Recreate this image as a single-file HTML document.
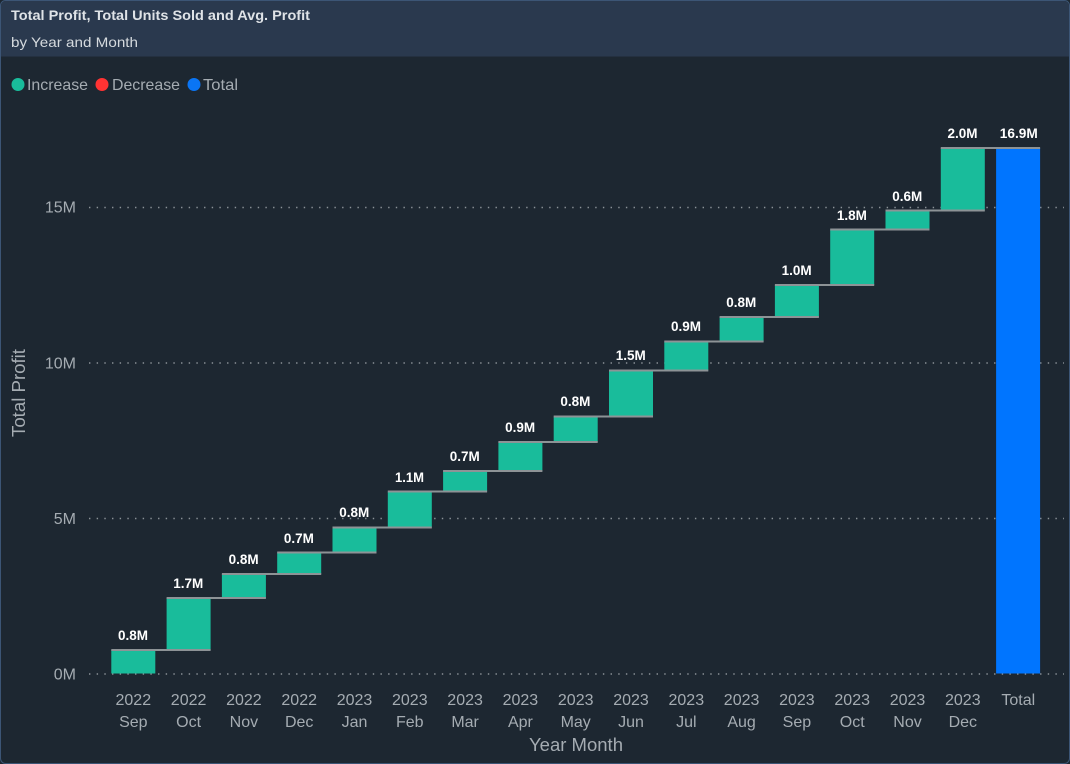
<!DOCTYPE html>
<html><head><meta charset="utf-8"><style>
html,body{margin:0;padding:0;background:#1d2731;width:1070px;height:764px;overflow:hidden}
svg{display:block;font-family:"Liberation Sans",sans-serif}
.a{fill:#a5acb2;font-size:16px;text-anchor:middle}
.y{fill:#a5acb2;font-size:16px;text-anchor:end}
.d{fill:#fff;font-size:14px;font-weight:bold;text-anchor:middle}
.b{fill:#19bc9b}
.c{stroke:#8d9396;stroke-width:1.9;fill:none}
.g{stroke:#8b9298;stroke-width:1.4;stroke-dasharray:1.4 6.27;fill:none}
</style></head><body>
<svg width="1070" height="764" viewBox="0 0 1070 764" xmlns="http://www.w3.org/2000/svg">
<rect x="0.5" y="0.5" width="1069" height="763" rx="5" fill="#1d2731" stroke="#3c5575"/>
<path d="M1 56.5V5.5A4.5 4.5 0 0 1 5.500 1H1064.500A4.500 4.500 0 0 1 1069 5.500V56.500Z" fill="#2a394e"/>
<text x="11" y="20" fill="#dfe3e7" font-size="14" font-weight="bold" textLength="299" lengthAdjust="spacingAndGlyphs">Total Profit, Total Units Sold and Avg. Profit</text>
<text x="11" y="47" fill="#d5dade" font-size="14" textLength="127" lengthAdjust="spacingAndGlyphs">by Year and Month</text>
<circle cx="18" cy="84.500" r="6.500" fill="#19bc9b"/><text x="27" y="90" fill="#a5acb2" font-size="16" textLength="61" lengthAdjust="spacingAndGlyphs">Increase</text>
<circle cx="102" cy="84.500" r="6.500" fill="#ff3333"/><text x="112" y="90" fill="#a5acb2" font-size="16" textLength="68" lengthAdjust="spacingAndGlyphs">Decrease</text>
<circle cx="194" cy="84.500" r="6.500" fill="#0a75f5"/><text x="203" y="90" fill="#a5acb2" font-size="16" textLength="35" lengthAdjust="spacingAndGlyphs">Total</text>

<path class="g" d="M89 207.500H1064M89 363H1064M89 518.500H1064M89 674H1064"/>

<g transform="translate(0.3 0)">
<rect class="b" x="111" y="650" width="44" height="23.500"/>
<rect class="b" x="166.300" y="598" width="44" height="52"/>
<rect class="b" x="221.600" y="574" width="44" height="24"/>
<rect class="b" x="276.900" y="552.500" width="44" height="21.500"/>
<rect class="b" x="332.200" y="527.500" width="44" height="25"/>
<rect class="b" x="387.500" y="491.500" width="44" height="36"/>
<rect class="b" x="442.800" y="471" width="44" height="20.500"/>
<rect class="b" x="498.100" y="442" width="44" height="29"/>
<rect class="b" x="553.400" y="416.500" width="44" height="25.500"/>
<rect class="b" x="608.700" y="370.500" width="44" height="46"/>
<rect class="b" x="664" y="341.500" width="44" height="29"/>
<rect class="b" x="719.300" y="317" width="44" height="24.500"/>
<rect class="b" x="774.600" y="285" width="44" height="32"/>
<rect class="b" x="829.900" y="229.500" width="44" height="55.500"/>
<rect class="b" x="885.200" y="210.500" width="44" height="19"/>
<rect class="b" x="940.500" y="148" width="44" height="62.500"/>
<rect x="995.800" y="148" width="44" height="525.500" fill="#0075ff"/>

<path class="c" d="M111 650H210.300M166.300 598H265.600M221.600 574H320.900M276.900 552.500H376.200M332.200 527.500H431.500M387.500 491.500H486.800M442.800 471H542.100M498.100 442H597.400M553.400 416.500H652.700M608.700 370.500H708M664 341.500H763.300M719.300 317H818.600M774.600 285H873.900M829.900 229.500H929.200M885.200 210.500H984.500M940.500 148H1039.800"/>
</g>

<g class="d">
<text x="133" y="640" textLength="30" lengthAdjust="spacingAndGlyphs">0.8M</text>
<text x="188.300" y="588" textLength="30" lengthAdjust="spacingAndGlyphs">1.7M</text>
<text x="243.600" y="564" textLength="30" lengthAdjust="spacingAndGlyphs">0.8M</text>
<text x="298.900" y="543" textLength="30" lengthAdjust="spacingAndGlyphs">0.7M</text>
<text x="354.200" y="517" textLength="30" lengthAdjust="spacingAndGlyphs">0.8M</text>
<text x="409.500" y="482" textLength="29" lengthAdjust="spacingAndGlyphs">1.1M</text>
<text x="464.800" y="461" textLength="30" lengthAdjust="spacingAndGlyphs">0.7M</text>
<text x="520.100" y="432" textLength="30" lengthAdjust="spacingAndGlyphs">0.9M</text>
<text x="575.400" y="406" textLength="30" lengthAdjust="spacingAndGlyphs">0.8M</text>
<text x="630.700" y="360" textLength="30" lengthAdjust="spacingAndGlyphs">1.5M</text>
<text x="686" y="331" textLength="30" lengthAdjust="spacingAndGlyphs">0.9M</text>
<text x="741.300" y="307" textLength="30" lengthAdjust="spacingAndGlyphs">0.8M</text>
<text x="796.600" y="275" textLength="30" lengthAdjust="spacingAndGlyphs">1.0M</text>
<text x="851.900" y="220" textLength="30" lengthAdjust="spacingAndGlyphs">1.8M</text>
<text x="907.200" y="201" textLength="30" lengthAdjust="spacingAndGlyphs">0.6M</text>
<text x="962.500" y="138" textLength="30" lengthAdjust="spacingAndGlyphs">2.0M</text>
<text x="1018.800" y="138" textLength="38" lengthAdjust="spacingAndGlyphs">16.9M</text>
</g>

<text class="y" x="76" y="212.500">15M</text>
<text class="y" x="76" y="368.500">10M</text>
<text class="y" x="76" y="524">5M</text>
<text class="y" x="76" y="679.500">0M</text>

<text x="25" y="437" fill="#a5acb2" font-size="18" transform="rotate(-90 25 437)" textLength="88" lengthAdjust="spacingAndGlyphs">Total Profit</text>

<g class="a">
<text x="133.300" y="705">2022</text><text x="133.300" y="727">Sep</text>
<text x="188.600" y="705">2022</text><text x="188.600" y="727">Oct</text>
<text x="243.900" y="705">2022</text><text x="243.900" y="727">Nov</text>
<text x="299.200" y="705">2022</text><text x="299.200" y="727">Dec</text>
<text x="354.500" y="705">2023</text><text x="354.500" y="727">Jan</text>
<text x="409.800" y="705">2023</text><text x="409.800" y="727">Feb</text>
<text x="465.100" y="705">2023</text><text x="465.100" y="727">Mar</text>
<text x="520.400" y="705">2023</text><text x="520.400" y="727">Apr</text>
<text x="575.700" y="705">2023</text><text x="575.700" y="727">May</text>
<text x="631" y="705">2023</text><text x="631" y="727">Jun</text>
<text x="686.300" y="705">2023</text><text x="686.300" y="727">Jul</text>
<text x="741.600" y="705">2023</text><text x="741.600" y="727">Aug</text>
<text x="796.900" y="705">2023</text><text x="796.900" y="727">Sep</text>
<text x="852.200" y="705">2023</text><text x="852.200" y="727">Oct</text>
<text x="907.500" y="705">2023</text><text x="907.500" y="727">Nov</text>
<text x="962.800" y="705">2023</text><text x="962.800" y="727">Dec</text>
<text x="1018.300" y="705">Total</text>
</g>
<text x="576" y="751" fill="#a5acb2" font-size="18" text-anchor="middle" textLength="94" lengthAdjust="spacingAndGlyphs">Year Month</text>
</svg>
</body></html>
